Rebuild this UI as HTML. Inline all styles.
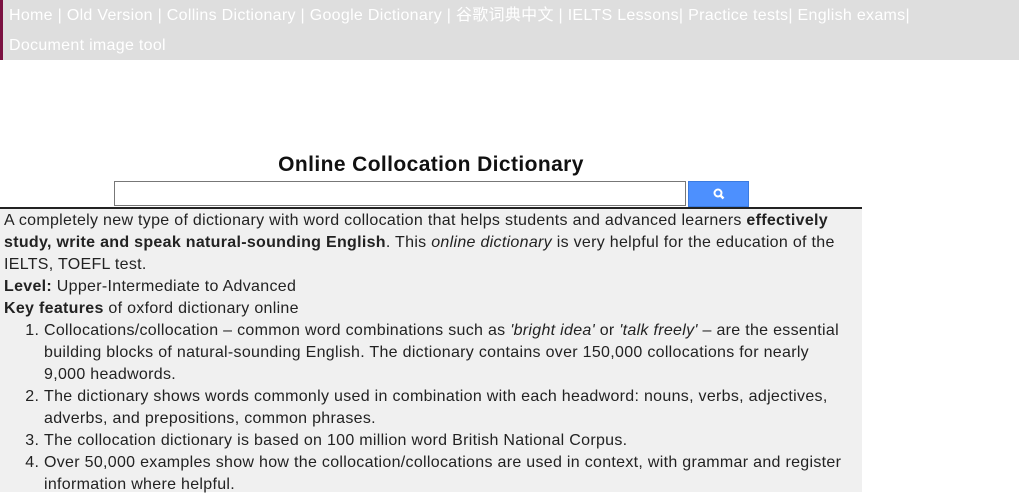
<!DOCTYPE html>
<html><head><meta charset="utf-8"><style>
body{margin:0;width:1024px;height:492px;overflow:hidden;background:#fff;font-family:"Liberation Sans","Noto Sans CJK SC",sans-serif;}
.nav{position:absolute;left:0;top:0;width:1019px;height:60px;background:#dedede;border-left:3px solid #7a1040;color:#fff;font-size:16px;letter-spacing:0.3px;line-height:30px;padding-left:6px;padding-top:1px;box-sizing:border-box;}
h1{position:absolute;left:0;width:862px;top:152px;margin:0;text-align:center;font-size:21px;letter-spacing:0.4px;font-weight:bold;color:#111;line-height:26px;}
.inp{position:absolute;left:114px;top:181px;width:572px;height:25px;border:1px solid #777;box-sizing:border-box;background:#fff;}
.btn{position:absolute;left:688px;top:181px;width:61px;height:26px;background:#4d90fe;border:1px solid #3b7be0;box-sizing:border-box;}
.line{position:absolute;left:0;top:207px;width:862px;height:2px;background:#222;}
.content{position:absolute;left:0;top:209px;width:862px;height:283px;background:#f0f0f0;padding:1px 4px 0;box-sizing:border-box;font-size:16px;letter-spacing:0.3px;line-height:22px;color:#222;}
ol{margin:0;padding-left:40px;}
</style></head><body>
<div class="nav">Home | Old Version | Collins Dictionary | Google Dictionary | 谷歌词典中文 | IELTS Lessons| Practice tests| English exams|<br>Document image tool</div>
<h1>Online Collocation Dictionary</h1>
<div class="inp"></div>
<div class="btn"><svg width="61" height="26" viewBox="0 0 61 26"><circle cx="29" cy="11" r="3.5" fill="none" stroke="#fff" stroke-width="2"/><line x1="31.5" y1="13.5" x2="34.5" y2="16.5" stroke="#fff" stroke-width="2.5"/></svg></div>
<div class="line"></div>
<div class="content">
A completely new type of dictionary with word collocation that helps students and advanced learners <b>effectively study, write and speak natural-sounding English</b>. This <i>online dictionary</i> is very helpful for the education of the IELTS, TOEFL test.<br>
<b>Level:</b> Upper-Intermediate to Advanced<br>
<b>Key features</b> of oxford dictionary online
<ol>
<li>Collocations/collocation – common word combinations such as <i>'bright idea'</i> or <i>'talk freely'</i> – are the essential building blocks of natural-sounding English. The dictionary contains over 150,000 collocations for nearly<br>9,000 headwords.</li>
<li>The dictionary shows words commonly used in combination with each headword: nouns, verbs, adjectives, adverbs, and prepositions, common phrases.</li>
<li>The collocation dictionary is based on 100 million word British National Corpus.</li>
<li>Over 50,000 examples show how the collocation/collocations are used in context, with grammar and register information where helpful.</li>
</ol>
</div>
</body></html>
